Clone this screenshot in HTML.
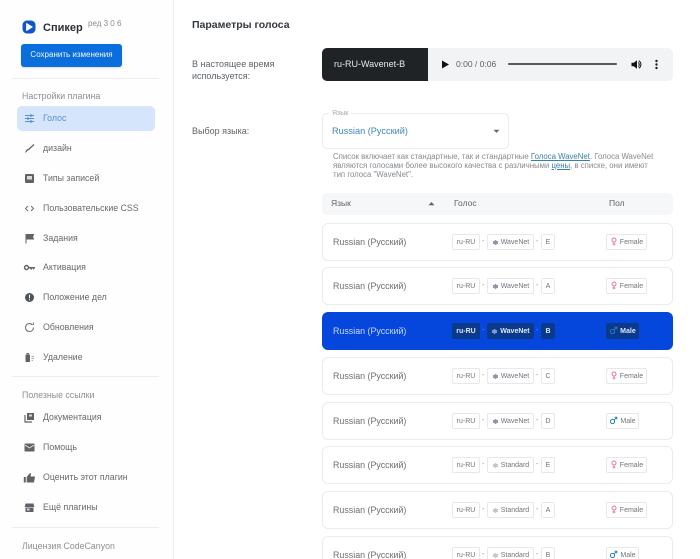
<!DOCTYPE html>
<html lang="ru"><head><meta charset="utf-8"><title>Спикер</title>
<style>
html,body{margin:0;padding:0;width:700px;height:559px;overflow:hidden}
body{background:#fff;font-family:"Liberation Sans","Noto Sans CJK SC",sans-serif;color:#5f6368}
#wrap{position:relative;width:700px;height:559px;overflow:hidden}
.a{position:absolute;white-space:nowrap}
#side{position:absolute;left:0;top:0;width:173px;height:559px;border-right:1px solid #eeeeee;background:#fefefe}
.hr{position:absolute;left:12px;width:147px;height:1px;background:#eeeeee}
.sec{position:absolute;left:22px;font-size:8.8px;line-height:12px;color:#8b8f94;white-space:nowrap}
.nav{position:absolute;left:43px;font-size:8.8px;line-height:12px;color:#666a6e;white-space:nowrap}
.ic{position:absolute;left:23px;width:13px;height:13px}
.row{position:absolute;left:322px;width:349px;height:36px;border:1px solid #e9ebee;border-radius:6px;background:#fff}
.row .n{position:absolute;left:10px;top:12px;font-size:8.9px;line-height:12px;color:#6b6f73;white-space:nowrap}
.c{position:absolute;top:10px;height:14px;border:1px solid #e6e8ea;border-radius:2px;font-size:7px;line-height:15px;color:#70757a;text-align:center;white-space:nowrap;background:#fff}
.d{position:absolute;top:12px;font-size:7px;line-height:12px;color:#8a8e92}
.c svg{vertical-align:-2px}
.st{fill:#8d95a8}.sd{fill:#c3c7cc}
.fe svg{stroke:#e8769a}.ma svg{stroke:#2a7fb8}
.sel{background:#0546dc;border-color:#0546dc}
.sel .n{color:#c9d8fb}
.sel .c{background:#0b3a8c;border-color:#0b3a8c;color:#dfe7f7;font-weight:bold}
.sel .st{fill:#7f9bd0}
.sel .d{color:#7fa0ee}
</style></head><body><div id="wrap">
<svg width="0" height="0" style="position:absolute"><defs>
<symbol id="s" viewBox="0 0 8 8"><path d="M4 .8 5.300 2.200 7.200 2.600 6.600 4 7.200 5.400 5.300 5.800 4 7.200 2.700 5.800.8 5.400 1.400 4 .8 2.600 2.700 2.200Z"/></symbol>
<symbol id="f" viewBox="0 0 8 9"><circle cx="4" cy="3" r="2" fill="none" stroke-width="1"/><path d="M4 5v3.500M2.500 7h3" fill="none" stroke-width=".9"/></symbol>
<symbol id="m" viewBox="0 0 9 9"><circle cx="3.500" cy="5.500" r="2.100" fill="none" stroke-width="1"/><path d="M5 4 7.800 1.200M5.500 1.200h2.300v2.300" fill="none" stroke-width=".9"/></symbol>
</defs></svg>
<div id="side">
<svg class="a" style="left:22px;top:20px" width="14" height="14" viewBox="0 0 14 14"><rect x="0.500" y="0.500" width="13" height="13" rx="4.500" fill="#0d57c9"/><path d="M4.600 3.600 L10.200 7 L4.600 10.400Z" fill="#fff" stroke="#fff" stroke-linejoin="round"/></svg>
<div class="a" style="left:43px;top:21px;font-size:11px;line-height:14px;font-weight:bold;color:#2b2f33">Спикер</div>
<div class="a" style="left:88px;top:19px;font-size:8px;line-height:10px;color:#8a8e92">ред 3 0 6</div>
<div class="a" style="left:21px;top:44px;width:101px;height:23px;background:#0a6fdc;border-radius:3px;color:#f1f6fd;font-size:8px;line-height:22px;text-align:center;box-shadow:0 1px 2px rgba(0,0,0,.15)">Сохранить изменения</div>
<div class="hr" style="top:78px"></div>
<div class="sec" style="top:90px">Настройки плагина</div>
<div class="a" style="left:17px;top:106px;width:138px;height:25px;background:#d5e5fb;border-radius:5px"></div>
<svg class="ic" style="top:112px" viewBox="0 0 13 13"><path d="M2 3.500h9M2 6.500h9M2 9.500h9" stroke="#5a8fd6" stroke-width="1.100"/><path d="M8 2v3M5 5v3M8 8v3" stroke="#5a8fd6" stroke-width="1.200"/></svg>
<div class="nav" style="top:112px;color:#5b8fd4">Голос</div>
<svg class="ic" style="top:142px" viewBox="0 0 13 13"><path d="M11 2.500 L5 8" stroke="#5f6368" stroke-width="1.200"/><path d="M5.500 7.500 L2.500 11 L2.500 9.500 Q3 8 4.500 7Z" fill="#4a4e52"/></svg>
<div class="nav" style="top:142px">дизайн</div>
<svg class="ic" style="top:172px" viewBox="0 0 13 13"><rect x="2" y="2" width="9" height="9" rx="1" fill="#5f6368"/><rect x="4" y="4" width="5" height="3.500" fill="#d8d9da"/></svg>
<div class="nav" style="top:172px">Типы записей</div>
<svg class="ic" style="top:202px" viewBox="0 0 13 13"><path d="M5 4 L2.500 6.500 L5 9M8 4 L10.500 6.500 L8 9" fill="none" stroke="#6b6f73" stroke-width="1"/></svg>
<div class="nav" style="top:202px">Пользовательские CSS</div>
<svg class="ic" style="top:232px" viewBox="0 0 13 13"><path d="M3 2v9.500M3 2.500h7.500l-1 2.200 1 2.300H3z" fill="#5f6368" stroke="#5f6368"/></svg>
<div class="nav" style="top:232px">Задания</div>
<svg class="ic" style="top:261px" viewBox="0 0 13 13"><circle cx="3.500" cy="6.500" r="2" fill="none" stroke="#5f6368" stroke-width="1.400"/><path d="M5.500 6h6.500v1.500h-1v1h-1v-1h-1v1H7.500v-1h-2z" fill="#5f6368"/></svg>
<div class="nav" style="top:261px">Активация</div>
<svg class="ic" style="top:291px" viewBox="0 0 13 13"><circle cx="6.500" cy="6.500" r="4.500" fill="#4f5459"/><path d="M6.500 3.800v3.400M6.500 8.300v1" stroke="#fff" stroke-width="1"/></svg>
<div class="nav" style="top:291px">Положение дел</div>
<svg class="ic" style="top:321px" viewBox="0 0 13 13"><path d="M10.500 6.500a4 4 0 1 1-1.500-3.100" fill="none" stroke="#6b6f73" stroke-width="1"/><path d="M7.500 3.500h3v-2" fill="none" stroke="#6b6f73" stroke-width=".8"/></svg>
<div class="nav" style="top:321px">Обновления</div>
<svg class="ic" style="top:351px" viewBox="0 0 13 13"><rect x="2.500" y="3.500" width="4.500" height="7.500" rx=".6" fill="#5f6368"/><rect x="3.500" y="2" width="2.500" height="1.200" fill="#5f6368"/><path d="M8.500 5.500h2.500M8.500 7.500h2.500M8.500 9.500h1.500" stroke="#8a8e92" stroke-width=".8"/></svg>
<div class="nav" style="top:351px">Удаление</div>
<div class="hr" style="top:376px"></div>
<div class="sec" style="top:389px">Полезные ссылки</div>
<svg class="ic" style="top:411px" viewBox="0 0 13 13"><path d="M4 2h7v7H4z" fill="#5f6368"/><path d="M2 4v7h7" fill="none" stroke="#5f6368" stroke-width="1.200"/><rect x="6" y="3.500" width="3" height="2" fill="#d8d9da"/></svg>
<div class="nav" style="top:411px">Документация</div>
<svg class="ic" style="top:441px" viewBox="0 0 13 13"><rect x="1.500" y="2.500" width="10" height="8" rx=".8" fill="#5f6368"/><path d="M2 4 L6.500 7 L11 4" fill="none" stroke="#e4e5e6" stroke-width=".9"/></svg>
<div class="nav" style="top:441px">Помощь</div>
<svg class="ic" style="top:471px" viewBox="0 0 13 13"><rect x="0.800" y="6" width="2" height="5.500" fill="#5f6368"/><path d="M3.700 6 L7 2 L8 2.500 L7.500 5.500 L12 5.500 L11 11.500 L3.700 11.500Z" fill="#5f6368"/></svg>
<div class="nav" style="top:471px">Оценить этот плагин</div>
<svg class="ic" style="top:501px" viewBox="0 0 13 13"><path d="M2.500 2.500h8l.8 3.500H1.700z" fill="#5f6368"/><rect x="2.500" y="6.500" width="8" height="4.500" fill="#5f6368"/><rect x="4" y="7.500" width="2.500" height="2" fill="#d8d9da"/></svg>
<div class="nav" style="top:501px">Ещё плагины</div>
<div class="hr" style="top:527px"></div>
<div class="sec" style="top:540px">Лицензия CodeCanyon</div>
</div>

<div class="a" style="left:192px;top:19px;font-size:10.500px;line-height:13px;font-weight:bold;color:#33383d">Параметры голоса</div>
<div class="a" style="left:192px;top:59px;font-size:9px;line-height:11.500px;color:#5f6368">В настоящее время<br>используется:</div>

<div class="a" style="left:322px;top:48px;width:351px;height:33px;background:#f1f3f4;border-radius:5px"></div>
<div class="a" style="left:322px;top:48px;width:106px;height:33px;background:#202326;border-radius:5px 0 0 5px;color:#e8e8e8;font-size:9px;line-height:33px;text-indent:12px">ru-RU-Wavenet-B</div>
<svg class="a" style="left:441px;top:60px" width="9" height="9" viewBox="0 0 9 9"><path d="M1 .5 8 4.500 1 8.500Z" fill="#111"/></svg>
<div class="a" style="left:456px;top:58px;font-size:8.500px;line-height:12px;color:#5f6368">0:00 / 0:06</div>
<div class="a" style="left:508px;top:63px;width:109px;height:2px;background:#5a5a5a;border-radius:1px"></div>
<svg class="a" style="left:630px;top:58px" width="13" height="13" viewBox="0 0 13 13"><path d="M1.500 4.800h2.300L7 2.200v8.600L3.800 8.200H1.500z" fill="#111"/><path d="M8.300 4.500a2.500 2.500 0 0 1 0 4M8.800 2.800a4.300 4.300 0 0 1 0 7.400" fill="none" stroke="#111" stroke-width="1"/></svg>
<svg class="a" style="left:654px;top:58px" width="5" height="13" viewBox="0 0 5 13"><circle cx="2.500" cy="3" r="1.200" fill="#222"/><circle cx="2.500" cy="6.500" r="1.200" fill="#222"/><circle cx="2.500" cy="10" r="1.200" fill="#222"/></svg>

<div class="a" style="left:192px;top:125px;font-size:9px;line-height:12px;color:#5f6368">Выбор языка:</div>
<div class="a" style="left:322px;top:113px;width:185px;height:34px;border:1px solid #e9ebee;border-radius:5px;background:#fff"></div>
<div class="a" style="left:329px;top:109px;padding:0 3px;background:#fff;font-size:7px;line-height:9px;color:#a3a6a9">Язык</div>
<div class="a" style="left:332px;top:125px;font-size:9.200px;line-height:13px;color:#3f86b8">Russian (Русский)</div>
<svg class="a" style="left:493px;top:129px" width="7" height="5" viewBox="0 0 7 5"><path d="M.5 .8h6L3.500 4z" fill="#6b6f73"/></svg>
<div class="a" style="left:333px;top:152px;font-size:7.800px;line-height:9px;color:#878b8f">Список включает как стандартные, так и стандартные <span style="color:#3a7fa5;text-decoration:underline">Голоса WaveNet</span>. Голоса WaveNet<br>являются голосами более высокого качества с различными <span style="color:#3a7fa5;text-decoration:underline">цены</span>, в списке, они имеют<br>тип голоса "WaveNet".</div>

<div class="a" style="left:322px;top:193px;width:351px;height:22px;background:#f6f7f8;border-radius:5px"></div>
<div class="a" style="left:331px;top:198px;font-size:8.500px;line-height:11px;color:#5f6368">Язык</div>
<svg class="a" style="left:428px;top:201px" width="7" height="5" viewBox="0 0 7 5"><path d="M.5 4.200h6L3.500 1z" fill="#5f6368"/></svg>
<div class="a" style="left:454px;top:198px;font-size:8.500px;line-height:11px;color:#5f6368">Голос</div>
<div class="a" style="left:609px;top:198px;font-size:8.500px;line-height:11px;color:#5f6368">Пол</div>

<div class="row" style="top:223px"><div class="n">Russian (Русский)</div><div class="c" style="left:129px;width:26px">ru-RU</div><div class="d" style="left:159px">-</div><div class="c" style="left:164px;width:45px"><svg class="st" width="7" height="7"><use href="#s"/></svg> WaveNet</div><div class="d" style="left:213px">-</div><div class="c" style="left:218px;width:12px">E</div><div class="c fe" style="left:283px;width:39px"><svg width="8" height="9"><use href="#f"/></svg> Female</div></div>
<div class="row" style="top:267px"><div class="n">Russian (Русский)</div><div class="c" style="left:129px;width:26px">ru-RU</div><div class="d" style="left:159px">-</div><div class="c" style="left:164px;width:45px"><svg class="st" width="7" height="7"><use href="#s"/></svg> WaveNet</div><div class="d" style="left:213px">-</div><div class="c" style="left:218px;width:12px">A</div><div class="c fe" style="left:283px;width:39px"><svg width="8" height="9"><use href="#f"/></svg> Female</div></div>
<div class="row sel" style="top:312px"><div class="n">Russian (Русский)</div><div class="c" style="left:129px;width:26px">ru-RU</div><div class="d" style="left:159px">-</div><div class="c" style="left:164px;width:45px"><svg class="st" width="7" height="7"><use href="#s"/></svg> WaveNet</div><div class="d" style="left:213px">-</div><div class="c" style="left:218px;width:12px">B</div><div class="c ma" style="left:283px;width:31px"><svg width="9" height="9"><use href="#m"/></svg> Male</div></div>
<div class="row" style="top:357px"><div class="n">Russian (Русский)</div><div class="c" style="left:129px;width:26px">ru-RU</div><div class="d" style="left:159px">-</div><div class="c" style="left:164px;width:45px"><svg class="st" width="7" height="7"><use href="#s"/></svg> WaveNet</div><div class="d" style="left:213px">-</div><div class="c" style="left:218px;width:12px">C</div><div class="c fe" style="left:283px;width:39px"><svg width="8" height="9"><use href="#f"/></svg> Female</div></div>
<div class="row" style="top:402px"><div class="n">Russian (Русский)</div><div class="c" style="left:129px;width:26px">ru-RU</div><div class="d" style="left:159px">-</div><div class="c" style="left:164px;width:45px"><svg class="st" width="7" height="7"><use href="#s"/></svg> WaveNet</div><div class="d" style="left:213px">-</div><div class="c" style="left:218px;width:12px">D</div><div class="c ma" style="left:283px;width:31px"><svg width="9" height="9"><use href="#m"/></svg> Male</div></div>
<div class="row" style="top:446px"><div class="n">Russian (Русский)</div><div class="c" style="left:129px;width:26px">ru-RU</div><div class="d" style="left:159px">-</div><div class="c" style="left:164px;width:45px"><svg class="sd" width="7" height="7"><use href="#s"/></svg> Standard</div><div class="d" style="left:213px">-</div><div class="c" style="left:218px;width:12px">E</div><div class="c fe" style="left:283px;width:39px"><svg width="8" height="9"><use href="#f"/></svg> Female</div></div>
<div class="row" style="top:491px"><div class="n">Russian (Русский)</div><div class="c" style="left:129px;width:26px">ru-RU</div><div class="d" style="left:159px">-</div><div class="c" style="left:164px;width:45px"><svg class="sd" width="7" height="7"><use href="#s"/></svg> Standard</div><div class="d" style="left:213px">-</div><div class="c" style="left:218px;width:12px">A</div><div class="c fe" style="left:283px;width:39px"><svg width="8" height="9"><use href="#f"/></svg> Female</div></div>
<div class="row" style="top:536px"><div class="n">Russian (Русский)</div><div class="c" style="left:129px;width:26px">ru-RU</div><div class="d" style="left:159px">-</div><div class="c" style="left:164px;width:45px"><svg class="sd" width="7" height="7"><use href="#s"/></svg> Standard</div><div class="d" style="left:213px">-</div><div class="c" style="left:218px;width:12px">B</div><div class="c ma" style="left:283px;width:31px"><svg width="9" height="9"><use href="#m"/></svg> Male</div></div>
</div></body></html>
